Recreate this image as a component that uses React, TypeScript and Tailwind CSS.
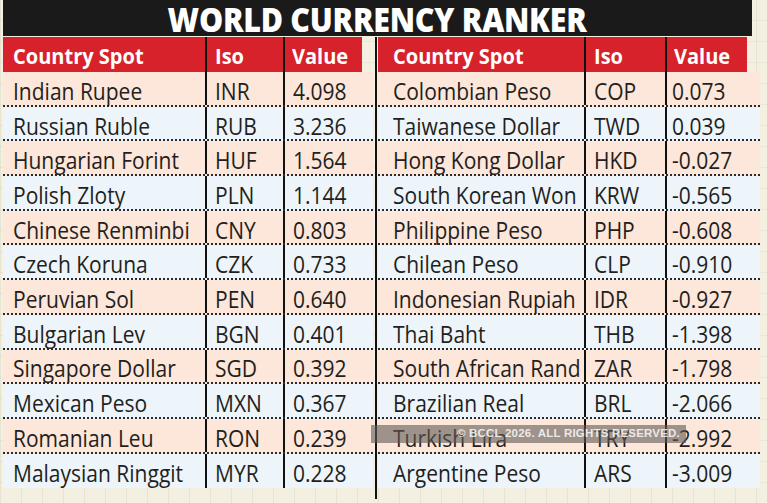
const left = [
  ["Indian Rupee", "INR", "4.098"],
  ["Russian Ruble", "RUB", "3.236"],
  ["Hungarian Forint", "HUF", "1.564"],
  ["Polish Zloty", "PLN", "1.144"],
  ["Chinese Renminbi", "CNY", "0.803"],
  ["Czech Koruna", "CZK", "0.733"],
  ["Peruvian Sol", "PEN", "0.640"],
  ["Bulgarian Lev", "BGN", "0.401"],
  ["Singapore Dollar", "SGD", "0.392"],
  ["Mexican Peso", "MXN", "0.367"],
  ["Romanian Leu", "RON", "0.239"],
  ["Malaysian Ringgit", "MYR", "0.228"],
];

const right = [
  ["Colombian Peso", "COP", "0.073"],
  ["Taiwanese Dollar", "TWD", "0.039"],
  ["Hong Kong Dollar", "HKD", "-0.027"],
  ["South Korean Won", "KRW", "-0.565"],
  ["Philippine Peso", "PHP", "-0.608"],
  ["Chilean Peso", "CLP", "-0.910"],
  ["Indonesian Rupiah", "IDR", "-0.927"],
  ["Thai Baht", "THB", "-1.398"],
  ["South African Rand", "ZAR", "-1.798"],
  ["Brazilian Real", "BRL", "-2.066"],
  ["Turkish Lira", "TRY", "-2.992"],
  ["Argentine Peso", "ARS", "-3.009"],
];

type Cols = { country: string; iso: string; value: string; header: string };

// the print font is semi-condensed, so squeeze Open Sans a little
const Txt = ({ children }: { children: React.ReactNode }) => (
  <span className="inline-block origin-left scale-x-[0.875] whitespace-nowrap">{children}</span>
);

const Head = ({ children }: { children: React.ReactNode }) => (
  <span className="inline-block origin-left scale-x-[0.91] whitespace-nowrap">{children}</span>
);

const Table = ({ rows, cols }: { rows: string[][]; cols: Cols }) => (
  <div className="flex flex-col">
    {/* red header */}
    <div className={`flex h-[35px] text-white text-[22px] font-bold ${cols.header}`}>
      <div className={`${cols.country} bg-[#d7222b] flex items-center`}>
        <Head>Country Spot</Head>
      </div>
      <div className="w-[2px] bg-[#111]" />
      <div className={`${cols.iso} bg-[#d7222b] pl-[8px] flex items-center`}>
        <Head>Iso</Head>
      </div>
      <div className="w-[2px] bg-[#111]" />
      <div className="flex-1 bg-[#d7222b] pl-[7px] flex items-center">
        <Head>Value</Head>
      </div>
    </div>
    {rows.map(([name, iso, val], i) => (
      <div
        key={iso}
        className={`flex h-[34.7px] text-[24px] text-[#231f20] ${
          i % 2 === 0 ? "bg-[#fde6da]" : "bg-[#eef5fa]"
        } ${i < rows.length - 1 ? "border-b-2 border-dotted border-[#2a2a2a]" : ""}`}
      >
        <div className={`${cols.country} flex items-center pt-[5px]`}>
          <Txt>{name}</Txt>
        </div>
        <div className="w-[2px] bg-[#111]" />
        <div className={`${cols.iso} pl-[8px] flex items-center pt-[5px]`}>
          <Txt>{iso}</Txt>
        </div>
        <div className="w-[2px] bg-[#111]" />
        <div className={`${cols.value} flex items-center pt-[5px]`}>
          <Txt>{val}</Txt>
        </div>
      </div>
    ))}
  </div>
);

export default function App() {
  return (
    <div className="relative w-[767px] h-[503px] overflow-hidden bg-[#f3f0e2] bg-[linear-gradient(90deg,rgba(180,170,140,0.18)_1px,transparent_1px),linear-gradient(0deg,rgba(180,170,140,0.14)_1px,transparent_1px)] bg-[size:21px_21px] pl-[3px] font-['Open_Sans',sans-serif] leading-none">
      {/* title bar */}
      <div className="w-[749px] h-[36px] bg-[#1b1a1a] flex items-center justify-center">
        <span className="inline-block origin-center scale-x-[0.895] whitespace-nowrap text-white text-[34px] font-extrabold tracking-[-0.3px] mt-[1px]">
          WORLD CURRENCY RANKER
        </span>
      </div>

      <div className="flex mt-[1px]">
        <div className="w-[370px]">
          <Table
            rows={left}
            cols={{ header: "w-[359px]", country: "w-[202px] pl-[10px]", iso: "w-[76px]", value: "w-[88px] pl-[8px]" }}
          />
        </div>
        <div className="w-[2px] h-[462px] bg-[#111] ml-[2px] mr-[1px]" />
        <div className="w-[382px]">
          <Table
            rows={right}
            cols={{ header: "w-[369px]", country: "w-[206px] pl-[15px]", iso: "w-[79px]", value: "w-[93px] pl-[5px]" }}
          />
        </div>
      </div>

      {/* bottom rule */}
      <div className="w-[759px] h-[3px] bg-[#111] mt-[6px]" />

      {/* watermark */}
      <div className="absolute left-[371px] top-[425px] w-[315px] h-[18px] bg-[rgba(95,90,85,0.6)] flex items-center justify-end pr-[6px]">
        <span className="font-['Liberation_Sans',sans-serif] text-[rgba(255,255,255,0.82)] text-[11.5px] font-bold tracking-[0.2px]">
          © BCCL 2026. ALL RIGHTS RESERVED.
        </span>
      </div>
    </div>
  );
}
